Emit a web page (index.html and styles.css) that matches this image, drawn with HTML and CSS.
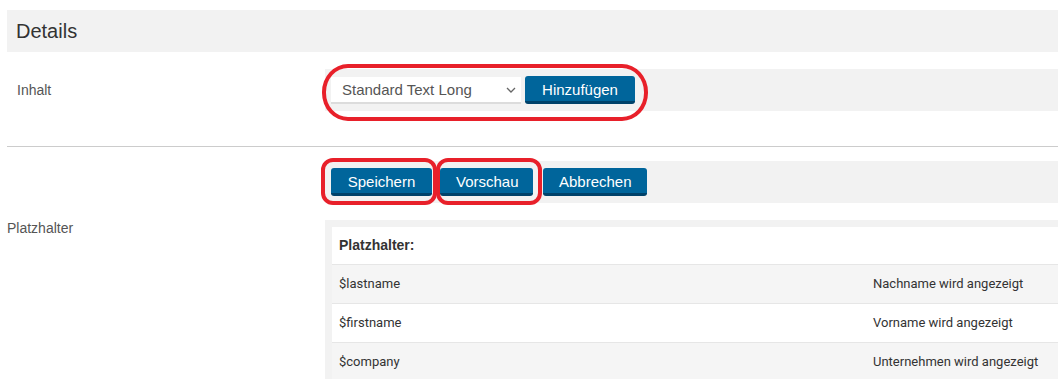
FILE: index.html
```html
<!doctype html>
<html lang="de">
<head>
	<meta charset="utf-8">
	<title>Details</title>
	<link rel="stylesheet" href="styles.css">
</head>
<body>

<div class="panel">
	<div class="panel-head">Details</div>

	<div class="form-row row-inhalt">
		<label class="form-label lbl-inhalt">Inhalt</label>
		<div class="form-field">
			<div class="field-band">
				<div class="select">
					<span>Standard Text Long</span>
					<svg class="chev" width="10" height="6" viewBox="0 0 10 6"><path d="M1 1l4 4 4-4" fill="none" stroke="#666" stroke-width="1.3"/></svg>
				</div>
				<button class="btn">Hinzufügen</button>
				<i class="mark mark-add"></i>
			</div>
		</div>
	</div>

	<hr class="sep">

	<div class="form-row row-actions">
		<div class="form-label"></div>
		<div class="form-field">
			<div class="field-band">
				<button class="btn btn-save">Speichern</button>
				<button class="btn btn-prev">Vorschau</button>
				<button class="btn btn-cancel">Abbrechen</button>
				<i class="mark mark-save"></i>
				<i class="mark mark-prev"></i>
			</div>
		</div>
	</div>

	<div class="form-row row-ph">
		<label class="form-label lbl-ph">Platzhalter</label>
		<div class="form-field">
			<div class="ph-box">
				<table class="ph-table">
					<tr class="ph-head"><th colspan="2">Platzhalter:</th></tr>
					<tr><td class="ph-var">$lastname</td><td>Nachname wird angezeigt</td></tr>
					<tr><td class="ph-var">$firstname</td><td>Vorname wird angezeigt</td></tr>
					<tr><td class="ph-var">$company</td><td>Unternehmen wird angezeigt</td></tr>
				</table>
			</div>
		</div>
	</div>
</div>

</body>
</html>
```

FILE: styles.css
```css
*{ padding: 0; margin: 0; box-sizing: border-box }
body{ font-family: "Liberation Sans", Arial, sans-serif; color: #333; background: #fff; overflow: hidden }

.panel{ margin: 10px 0 0 7px }
.panel-head{ height: 42px; line-height: 42px; background: #f2f2f2; padding-left: 9px; font-size: 20px; color: #333 }

.form-row{ display: grid; grid-template-columns: 318px 1fr }
.form-label{ font-size: 14px; color: #555; display: flex; align-items: center }
.lbl-inhalt{ padding-left: 10px }
.row-inhalt{ margin-top: 17px }
.row-actions{ margin-top: 14px }
.row-ph{ margin-top: 17px }
.lbl-ph{ align-items: flex-start; height: 14px; margin-top: 0 }

.field-band{ position: relative; background: #f2f2f2; height: 42px; display: flex; align-items: center; padding-left: 6px; gap: 4px }

.select{ width: 190px; height: 25px; background: #fff; box-shadow: 0 2px 0 #dcdcdc; display: flex; align-items: center; justify-content: space-between; padding: 0 5px 0 11px; font-size: 15px; color: #555; margin-top: -1px }
.chev{ display: block }

.btn{ font-family: "Liberation Sans", Arial, sans-serif; font-size: 15px; color: #fff; background: #00659b; border: 0; border-bottom: 3px solid #00426a; border-radius: 3px; height: 28px; padding: 1px 16px 0; cursor: pointer }
.row-inhalt .btn{ width: 110px; padding: 1px 0 0 }
.row-actions .field-band{ gap: 0 }
.btn-save{ width: 101px }
.btn-prev{ width: 93px; margin-left: 8px }
.btn-cancel{ width: 104px; margin-left: 10px }

.mark{ position: absolute; border: 4px solid #e8202a; pointer-events: none }
.mark-add{ left: -3px; top: -5px; width: 326px; height: 57px; border-radius: 26px / 28px }
.mark-save{ left: -4px; top: -3px; width: 116px; height: 47px; border-radius: 12px }
.mark-prev{ left: 111px; top: -3px; width: 106px; height: 47px; border-radius: 12px }

.sep{ border: 0; border-top: 1px solid #ccc; margin-top: 35px }

.ph-box{ background: #f2f2f2; padding: 7px 0 0 7px; height: 159px }
.ph-table{ width: 100%; border-collapse: collapse; background: #fff; font-family: Roboto, "Liberation Sans", sans-serif; font-size: 13px; color: #333 }
.ph-table th{ text-align: left; font-family: "Liberation Sans", Arial, sans-serif; font-size: 14px; font-weight: bold; height: 37px; padding: 0 7px }
.ph-table td{ height: 39px; padding: 0 7px; border-top: 1px solid #e6e6e6 }
.ph-table tr:nth-child(even) td{ background: #f5f5f5 }
.ph-var{ width: 534px }
```
